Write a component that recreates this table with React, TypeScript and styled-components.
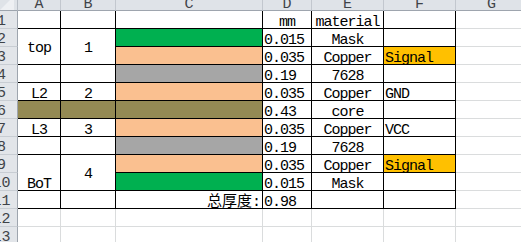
import styled, { createGlobalStyle } from "styled-components";

const GREEN = "#00b050";
const PEACH = "#fac090";
const GRAY = "#a6a6a6";
const OLIVE = "#948a54";
const ORANGE = "#ffc000";

type Align = "left" | "center" | "right";

type CellSpec = {
  text?: string;
  fill?: string;
  align?: Align;
  span?: number;
  middle?: boolean;
  cjk?: boolean;
} | null;

const GlobalStyle = createGlobalStyle`
  html, body {
    margin: 0;
    padding: 0;
    background: #ffffff;
    overflow: hidden;
  }
`;

const Viewport = styled.div`
  width: 521px;
  height: 242px;
  overflow: hidden;
  background: #ffffff;
`;

const Sheet = styled.div`
  display: grid;
  grid-template-columns: 32px 43px 55px 147px 49px 72px 72px 72px;
  grid-template-rows: 20px repeat(13, 18px);
  margin: -9px 0 0 -14px;
  width: max-content;
  font-family: "Liberation Mono", "Noto Sans CJK SC", monospace;
  font-size: 15px;
  color: #000000;
`;

const Corner = styled.div`
  position: relative;
  box-sizing: border-box;
  background: #dfe3e8;
  border-right: 1px solid #b8bec6;
  border-bottom: 1px solid #9ea5ae;
`;

const CornerMark = styled.svg`
  position: absolute;
  right: 3px;
  bottom: 0;
`;

const ColHead = styled.div`
  box-sizing: border-box;
  display: flex;
  align-items: flex-end;
  justify-content: center;
  line-height: 10px;
  background: #dfe3e8;
  color: #3f4348;
  border-right: 1px solid #c2c7ce;
  border-bottom: 1px solid #9ea5ae;
`;

const RowHead = styled.div`
  box-sizing: border-box;
  display: flex;
  align-items: flex-end;
  justify-content: center;
  line-height: 12px;
  background: #e2e5e9;
  color: #3f4348;
  border-right: 1px solid #9ea5ae;
  border-bottom: 1px solid #c8cdd3;
`;

const Cell = styled.div<{
  $fill?: string;
  $edge: boolean;
  $align: Align;
  $span: number;
  $middle: boolean;
  $cjk: boolean;
}>`
  box-sizing: border-box;
  grid-row: span ${(p) => p.$span};
  display: flex;
  align-items: ${(p) => (p.$middle ? "center" : "flex-end")};
  justify-content: ${(p) =>
    p.$align === "center" ? "center" : p.$align === "right" ? "flex-end" : "flex-start"};
  padding: ${(p) => (p.$middle ? "4px 1px 0" : "0 1px")};
  line-height: 10px;
  white-space: nowrap;
  letter-spacing: ${(p) => (p.$cjk ? "0" : "-1px")};
  background: ${(p) => p.$fill ?? "#ffffff"};
  border-right: 1px solid ${(p) => (p.$edge ? "#000000" : "#dadcdd")};
  border-bottom: 1px solid ${(p) => (p.$edge ? "#000000" : "#dadcdd")};
`;

const columns = ["A", "B", "C", "D", "E", "F", "G", "H"];

const table: CellSpec[][] = [
  [{}, {}, {}, { text: "mm", align: "center" }, { text: "material", align: "center" }, {}],
  [
    { text: "top", align: "center", span: 2, middle: true },
    { text: "1", align: "center", span: 2, middle: true },
    { fill: GREEN },
    { text: "0.015" },
    { text: "Mask", align: "center" },
    {},
  ],
  [null, null, { fill: PEACH }, { text: "0.035" }, { text: "Copper", align: "center" }, { text: "Signal", fill: ORANGE }],
  [{}, {}, { fill: GRAY }, { text: "0.19" }, { text: "7628", align: "center" }, {}],
  [
    { text: "L2", align: "center" },
    { text: "2", align: "center" },
    { fill: PEACH },
    { text: "0.035" },
    { text: "Copper", align: "center" },
    { text: "GND" },
  ],
  [{ fill: OLIVE }, { fill: OLIVE }, { fill: OLIVE }, { text: "0.43" }, { text: "core", align: "center" }, {}],
  [
    { text: "L3", align: "center" },
    { text: "3", align: "center" },
    { fill: PEACH },
    { text: "0.035" },
    { text: "Copper", align: "center" },
    { text: "VCC" },
  ],
  [{}, {}, { fill: GRAY }, { text: "0.19" }, { text: "7628", align: "center" }, {}],
  [
    { text: "BoT", align: "center", span: 2 },
    { text: "4", align: "center", span: 2, middle: true },
    { fill: PEACH },
    { text: "0.035" },
    { text: "Copper", align: "center" },
    { text: "Signal", fill: ORANGE },
  ],
  [null, null, { fill: GREEN }, { text: "0.015" }, { text: "Mask", align: "center" }, {}],
  [{}, {}, { text: "总厚度:", align: "right", cjk: true }, { text: "0.98" }, {}, {}],
];

const TOTAL_ROWS = 13;
const BODY_COLS = 7;

export default function App() {
  const rows = Array.from({ length: TOTAL_ROWS }, (_, i) => i);

  return (
    <Viewport>
      <GlobalStyle />
      <Sheet>
        <Corner>
          <CornerMark width="14" height="14" viewBox="0 0 14 14">
            <polygon points="0,14 14,14 14,0" fill="#eef0f3" />
          </CornerMark>
        </Corner>
        {columns.slice(0, BODY_COLS).map((c) => (
          <ColHead key={c}>{c}</ColHead>
        ))}

        {rows.map((r) => {
          const specs = table[r];
          const cells = [];
          for (let c = 0; c < BODY_COLS; c++) {
            const spec = specs ? (c < specs.length ? specs[c] : {}) : {};
            if (spec === null) continue;
            const edge = !!specs && c < specs.length;
            cells.push(
              <Cell
                key={c}
                $fill={spec.fill}
                $edge={edge}
                $align={spec.align ?? (spec.cjk ? "right" : "left")}
                $span={spec.span ?? 1}
                $middle={!!spec.middle}
                $cjk={!!spec.cjk}
              >
                {spec.text}
              </Cell>
            );
          }
          return [<RowHead key={`h${r}`}>{r + 1}</RowHead>, ...cells];
        })}
      </Sheet>
    </Viewport>
  );
}
